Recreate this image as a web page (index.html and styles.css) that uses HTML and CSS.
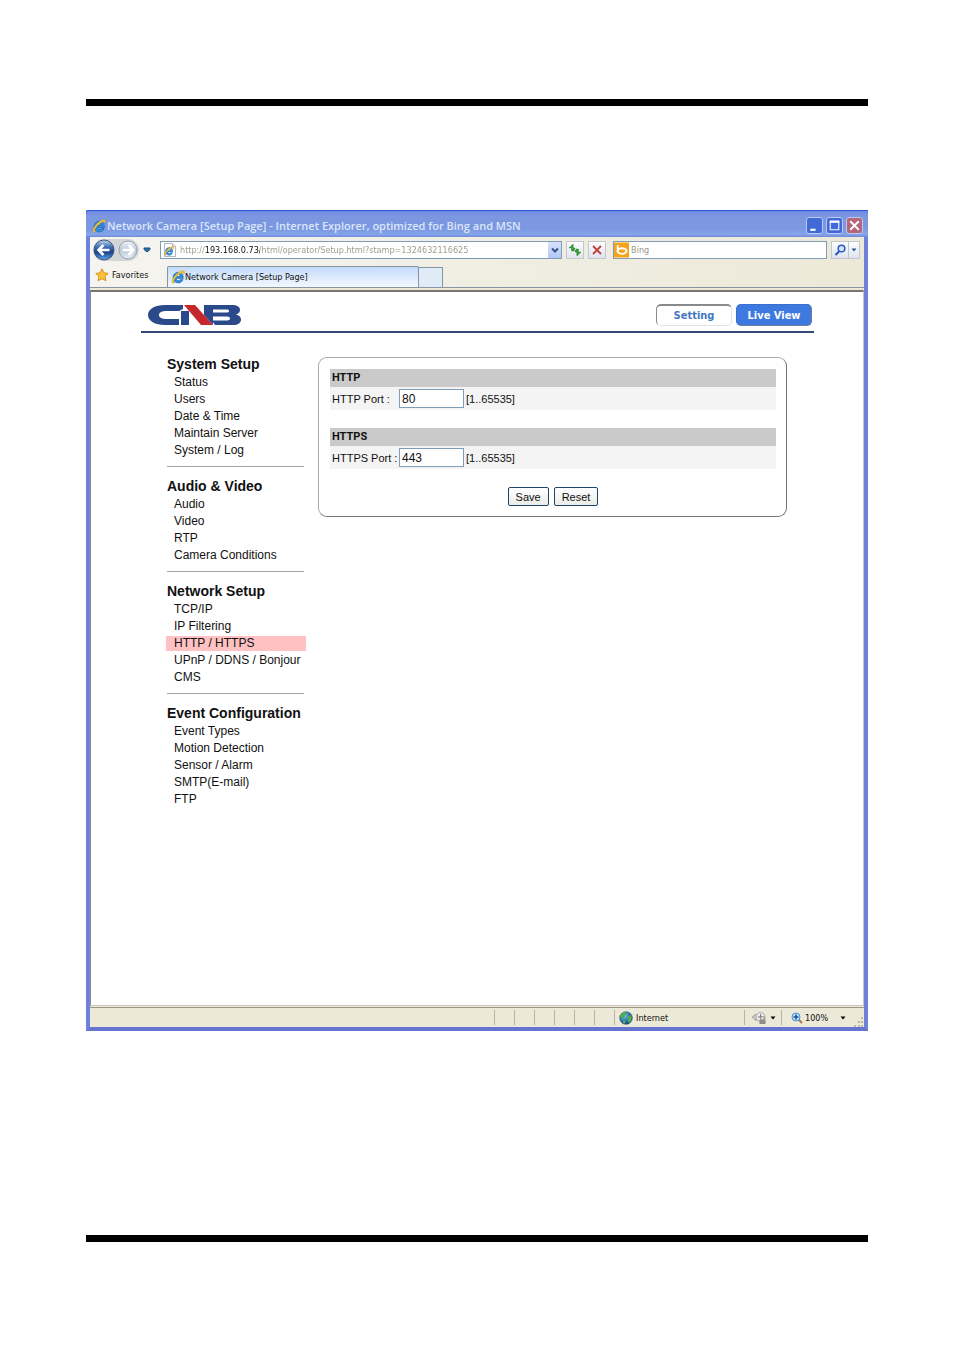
FILE: index.html
```html
<!DOCTYPE html>
<html lang="en">
<head>
  <meta charset="UTF-8" />
  <meta name="viewport" content="width=device-width, initial-scale=1.0"/>
  <title>Network Camera [Setup Page]</title>
  <link rel="stylesheet" href="styles.css">
</head>
<body>
  <!-- shared icons -->
  <svg class="defs" width="0" height="0" aria-hidden="true">
    <defs>
      <linearGradient id="ball" x1="0" y1="0" x2="0" y2="1">
        <stop offset="0" stop-color="#c9daf0"/>
        <stop offset="0.35" stop-color="#3f6fb4"/>
        <stop offset="0.6" stop-color="#173f8a"/>
        <stop offset="1" stop-color="#5fa8ea"/>
      </linearGradient>
      <linearGradient id="ball-off" x1="0" y1="0" x2="0" y2="1">
        <stop offset="0" stop-color="#f4f7fb"/>
        <stop offset="0.5" stop-color="#b9c6da"/>
        <stop offset="1" stop-color="#e9f0f8"/>
      </linearGradient>
      <radialGradient id="sea" cx="35%" cy="30%" r="75%">
        <stop offset="0" stop-color="#9fd0f5"/>
        <stop offset="0.5" stop-color="#2f7cc4"/>
        <stop offset="1" stop-color="#123f7a"/>
      </radialGradient>
    </defs>
    <symbol id="ie" viewBox="0 0 14 14">
      <path d="M12.300 8.400H5.200c.1 1.300 1 2.100 2.200 2.100.9 0 1.500-.3 2-1h2.600c-.7 2.200-2.300 3.400-4.700 3.400C4.100 12.900 2 10.700 2 7.600s2.200-5.400 5.300-5.400c3.100 0 5.200 2.300 5 6.200zM9.400 6.500C9.200 5.300 8.400 4.600 7.300 4.600S5.400 5.300 5.200 6.500z" fill="#2a8fe0" stroke="#1457a0" stroke-width=".5"/>
      <path d="M1.600 13.200C-.6 11.300 3.200 5.200 7.400 2.400 10.200.600 13 .1 13.500 1.700c.2.900-.2 1.800-.8 2.900.1-1.500-.2-2.100-1.300-1.900C8.700 3.100 4.200 7.200 2.900 10.300c-.5 1.300-.2 1.900.8 1.700-.6 1-1.500 1.700-2.100 1.200z" fill="#f9c433" stroke="#b78312" stroke-width=".3"/>
    </symbol>
  </svg>

  <div class="sheet">
    <hr class="rule">

    <div class="window">
      <div class="titlebar">
        <svg class="icon"><use href="#ie"/></svg>
        <span class="window-title">Network Camera [Setup Page] - Internet Explorer, optimized for Bing and MSN</span>
        <button class="win-btn" aria-label="Minimize"><svg viewBox="0 0 14 14"><path d="M3 10h5v2H3z" fill="#fff"/></svg></button>
        <button class="win-btn" aria-label="Maximize"><svg viewBox="0 0 14 14"><path d="M3 3h8v8H3z" fill="none" stroke="#fff"/><path d="M2.500 2.500h9v2h-9z" fill="#fff"/></svg></button>
        <button class="win-btn close" aria-label="Close"><svg viewBox="0 0 14 14"><path d="M3 3l8 8M11 3l-8 8" stroke="#fff" stroke-width="1.800"/></svg></button>
      </div>

      <div class="navbar">
        <div class="history">
          <div class="pod">
            <button class="plain" aria-label="Back">
              <svg width="22" height="22" viewBox="0 0 22 22"><circle cx="11" cy="11" r="10" fill="url(#ball)" stroke="#3d557f"/><path d="M10.500 6L5.500 11l5 5M6.500 11H16.500" fill="none" stroke="#fff" stroke-width="2.600"/></svg>
            </button>
            <button class="plain" aria-label="Forward">
              <svg width="22" height="22" viewBox="0 0 22 22"><circle cx="11" cy="11" r="9" fill="url(#ball-off)" stroke="#97a3b5"/><path d="M11.500 6l5 5-5 5M15.500 11H5.500" fill="none" stroke="#fff" stroke-width="2.600"/></svg>
            </button>
          </div>
          <button class="plain" aria-label="Recent pages">
            <svg width="8" height="6" viewBox="0 0 8 6"><path d="M1 1h6v1.500L4 5 1 2.500z" fill="#2f72a8" stroke="#1b4a78"/></svg>
          </button>
        </div>
        <div class="field address">
          <svg class="icon" viewBox="0 0 14 14"><path d="M1.500.5h8l3 3v10h-11z" fill="#fff" stroke="#b4b7bd"/><path d="M9.500.5v3h3" fill="none" stroke="#b4b7bd"/><use href="#ie" x="1" y="3" width="10" height="10"/></svg>
          <input type="text" class="url" aria-label="Address" value="http://193.168.0.73/html/operator/Setup.html?stamp=1324632116625">
          <button class="drop" aria-label="Show addresses"><svg width="8" height="7" viewBox="0 0 8 7"><path d="M1 1.500l3 3 3-3" fill="none" stroke="#34538c" stroke-width="2"/></svg></button>
        </div>
        <button class="tool" aria-label="Refresh">
          <svg width="14" height="14" viewBox="0 0 14 14"><path d="M5 1L1 5h2.500v3H6V6.500h1V5H5.500zM9 13l4-4h-2.500V6H8v1.500H7V9h1.500z" fill="#35a035" stroke="#1d7a22" stroke-width=".4"/></svg>
        </button>
        <button class="tool" aria-label="Stop">
          <svg width="14" height="14" viewBox="0 0 14 14"><path d="M3 3l8 8M11 3l-8 8" stroke="#c2403c" stroke-width="1.800"/></svg>
        </button>
        <div class="field search">
          <svg class="bing" viewBox="0 0 14 14"><path d="M0 0h14v14H0z" fill="#f7a21b"/><path d="M3.500 2.500V9" stroke="#fff" stroke-width="1.800"/><ellipse cx="7.500" cy="8" rx="4.200" ry="2.600" fill="none" stroke="#fff" stroke-width="1.800"/></svg>
          <input type="text" aria-label="Search" value="Bing">
        </div>
        <div class="go">
          <button class="tool" aria-label="Search"><svg width="14" height="14" viewBox="0 0 14 14"><path d="M6 8.500L2.500 12" stroke="#2a53b5" stroke-width="2"/><circle cx="8.500" cy="5.500" r="3.300" fill="#d5e6fb" stroke="#2a5cc4" stroke-width="1.500"/></svg></button>
          <button class="tool narrow" aria-label="Search options"><svg width="6" height="4" viewBox="0 0 6 4"><path d="M.5.5h5L3 3.500z" fill="#1e5a96"/></svg></button>
        </div>
      </div>

      <div class="tabbar">
        <button class="favorites">
          <svg class="icon" viewBox="0 0 14 14"><path d="M7 .8l1.900 4 4.300.6-3.100 3 .8 4.400L7 10.700l-3.900 2.100.8-4.400-3.100-3 4.300-.6z" fill="#fbc436" stroke="#c98214" stroke-width=".8"/></svg>
          Favorites
        </button>
        <a class="tab" href="#"><svg class="icon"><use href="#ie"/></svg>Network Camera [Setup Page]</a>
        <button class="new-tab" aria-label="New Tab"></button>
      </div>

      <div class="page">
        <header>
          <svg class="logo" viewBox="0 0 94 20" role="img" aria-label="CNB">
            <path d="M35 0H17C7 0 0 4 0 10s7 10 17 10h14v-6H19c-5 0-8-1.300-8-4s3-4 8-4h12l4-2z" fill="#2b4a8b"/>
            <path d="M33 6h8v14h-8zM56 0h9v20l-9-10z" fill="#2b4a8b"/>
            <path d="M36 0h11l18 20H53z" fill="#c4282c"/>
            <path d="M64 0h20c5 0 8 1.800 8 5 0 2.200-1.500 3.800-4 4.500 3 .7 5 2.400 5 5 0 3.500-3 5.500-8 5.500H67l-3-4.500h14c2.500 0 4-.6 4-2s-1.500-2-4-2H64v-4h14c2 0 3-.4 3-1.500s-1-1.500-3-1.500H64z" fill="#2b4a8b"/>
          </svg>
          <nav class="views">
            <a class="view current" href="#">Setting</a>
            <a class="view live" href="#">Live View</a>
          </nav>
        </header>

        <div class="columns">
          <nav class="menu">
            <section>
              <h2>System Setup</h2>
              <a href="#">Status</a>
              <a href="#">Users</a>
              <a href="#">Date &amp; Time</a>
              <a href="#">Maintain Server</a>
              <a href="#">System / Log</a>
            </section>
            <section>
              <h2>Audio &amp; Video</h2>
              <a href="#">Audio</a>
              <a href="#">Video</a>
              <a href="#">RTP</a>
              <a href="#">Camera Conditions</a>
            </section>
            <section>
              <h2>Network Setup</h2>
              <a href="#">TCP/IP</a>
              <a href="#">IP Filtering</a>
              <a href="#" class="active">HTTP / HTTPS</a>
              <a href="#">UPnP / DDNS / Bonjour</a>
              <a href="#">CMS</a>
            </section>
            <section>
              <h2>Event Configuration</h2>
              <a href="#">Event Types</a>
              <a href="#">Motion Detection</a>
              <a href="#">Sensor / Alarm</a>
              <a href="#">SMTP(E-mail)</a>
              <a href="#">FTP</a>
            </section>
          </nav>

          <form class="panel">
            <h3>HTTP</h3>
            <div class="row">
              <label for="http-port">HTTP Port :</label>
              <input type="text" id="http-port" value="80">
              <span>[1..65535]</span>
            </div>
            <h3>HTTPS</h3>
            <div class="row">
              <label for="https-port">HTTPS Port :</label>
              <input type="text" id="https-port" value="443">
              <span>[1..65535]</span>
            </div>
            <div class="actions">
              <button type="button">Save</button>
              <button type="reset">Reset</button>
            </div>
          </form>
        </div>
      </div>

      <footer class="statusbar">
        <div class="cell message"></div>
        <div class="cell"></div>
        <div class="cell"></div>
        <div class="cell"></div>
        <div class="cell"></div>
        <div class="cell"></div>
        <div class="cell"></div>
        <div class="cell zone">
          <svg class="icon" viewBox="0 0 14 14"><circle cx="7" cy="7" r="6.300" fill="url(#sea)" stroke="#24507e" stroke-width=".6"/><path d="M2 3.500C3.500 1.500 6 1 7.500 1.300L8 3 6 4.500 5.500 7 3.500 7.500 1.500 6zM8.500 6l3-2 1.300 2.500-.8 3.500-2 2-1.500-2.500zM4 9l2.500 1L6 12.800 4 12z" fill="#4fae45"/></svg>
          Internet
        </div>
        <button class="cell privacy" aria-label="Protected mode">
          <svg class="icon" viewBox="0 0 14 14"><path d="M0 6l4-3v2h3v3H4v2z" fill="#c9c9c5" stroke="#8e8e8a" stroke-width=".6"/><circle cx="8.500" cy="6" r="4.500" fill="#ecece8" stroke="#a5a5a1"/><path d="M8.500 3v3H6" fill="none" stroke="#777"/><path d="M7.500 8.500h6V13h-6z" fill="#8d8d8d"/><path d="M8.800 8.500V7c0-2 3.400-2 3.400 0v1.500" fill="none" stroke="#777"/></svg>
          <svg width="6" height="4" viewBox="0 0 6 4"><path d="M.5.5h5L3 3.500z"/></svg>
        </button>
        <button class="cell zoom">
          <svg width="12" height="12" viewBox="0 0 12 12"><path d="M7.500 7.500L11 11" stroke="#a8754c" stroke-width="2"/><circle cx="5" cy="5" r="4" fill="#bfe0fa" stroke="#4a90d0"/><path d="M5 2.500v5M2.500 5h5" stroke="#1b4f9c" stroke-width="1.500"/></svg>
          <span>100%</span>
          <svg width="6" height="4" viewBox="0 0 6 4"><path d="M.5.5h5L3 3.500z"/></svg>
        </button>
        <svg class="grip" width="10" height="10" viewBox="0 0 10 10"><path d="M7 0h2v2H7zM4 4h2v2H4zM7 4h2v2H7zM0 8h2v2H0zM4 8h2v2H4zM7 8h2v2H7z" fill="#bdb9a6"/></svg>
      </footer>
    </div>

    <hr class="rule">
  </div>
</body>
</html>
```

FILE: styles.css
```css
:root {
  --frame: #7081dc;
  --chrome: #ece9d8;
  --line: #8795a3;
  --field: #7f9db9;
  --navy: #334a76;
  --ui: "DejaVu Sans Condensed", "DejaVu Sans", sans-serif;
}

* {
  margin: 0;
  padding: 0;
  box-sizing: border-box;
}

body {
  background: #fff;
  color: #111;
  font-family: "Liberation Sans", Arial, sans-serif;
  font-size: 12px;
}

a {
  color: inherit;
  text-decoration: none;
}

button,
input {
  font: inherit;
  color: inherit;
}

svg {
  display: block;
  flex: none;
}

.defs {
  position: absolute;
}

.icon {
  width: 14px;
  height: 14px;
}

.sheet {
  padding: 99px 86px 108px;
}

.rule {
  height: 7px;
  border: 0;
  background: #000;
}

/* browser window */
.window {
  margin: 104px 0 204px;
  border: 4px solid var(--frame);
  border-top: 0;
  border-bottom-color: #6674d0;
  background: var(--chrome);
  font-family: var(--ui);
  font-size: 9px;
}

.titlebar {
  display: flex;
  align-items: center;
  gap: 3px;
  height: 27px;
  margin: 0 -4px;
  padding: 3px 5px 0 6px;
  border-top: 1px solid #2b55d4;
  border-radius: 4px 0 0 0;
  background: linear-gradient(#6c8ae4, #7b97e0 20%, #7c98e0 70%, #85a6ea 90%, #7288d8);
}

.titlebar .icon {
  margin-right: -2px;
}

.window-title {
  flex: 1;
  color: #dbe6fb;
  font-family: "Open Sans", "Noto Sans", sans-serif;
  font-size: 11px;
  font-weight: 600;
  white-space: nowrap;
}

.win-btn {
  width: 17px;
  height: 17px;
  border: 1px solid #b9c9f4;
  border-radius: 3px;
  background: #4169d8;
}

.win-btn.close {
  background: #b7657a;
}

.navbar {
  display: flex;
  align-items: center;
  gap: 4px;
  height: 26px;
  padding: 0 4px 0 3px;
  background: linear-gradient(90deg, #f5f4ef, var(--chrome));
}

.history {
  display: flex;
  align-items: center;
  gap: 4px;
  width: 63px;
}

.pod {
  display: flex;
  gap: 2px;
  border-radius: 11px;
  background: #d4d5d6;
}

.plain {
  border: 0;
  background: none;
}

.field {
  display: flex;
  align-items: center;
  height: 18px;
  border: 1px solid var(--field);
  background: #fff;
}

.field input {
  flex: 1;
  min-width: 0;
  border: 0;
  outline: 0;
  background: none;
  color: #9a9789;
}

.address {
  flex: 402;
  gap: 3px;
  padding-left: 2px;
}

/* host part of the address is darker than the rest */
.address .url {
  background: linear-gradient(90deg, #9a9789 25px, #111 25px, #111 80px, #9a9789 80px);
  background-clip: text;
  -webkit-background-clip: text;
  color: transparent;
}

.drop {
  display: flex;
  align-items: center;
  justify-content: center;
  width: 13px;
  height: 16px;
  border: 0;
  background: linear-gradient(#d6e2fd, #b3c8f5);
}

.tool {
  display: flex;
  align-items: center;
  justify-content: center;
  width: 18px;
  height: 18px;
  border: 1px solid #c3c6cf;
  background: linear-gradient(#fdfdfe, #dfe4ee);
}

.tool.narrow {
  width: 11px;
  border-left: 0;
}

.search {
  flex: 214;
  gap: 2px;
  margin-left: 3px;
}

.bing {
  width: 15px;
  height: 16px;
}

.go {
  display: flex;
}

.tabbar {
  display: flex;
  align-items: flex-end;
  height: 25px;
  border-bottom: 1px solid var(--line);
  background: linear-gradient(90deg, #f5f4ef, var(--chrome));
}

.favorites {
  display: flex;
  align-items: center;
  gap: 3px;
  width: 77px;
  height: 24px;
  padding-left: 5px;
  border: 0;
  background: none;
}

.tab {
  display: flex;
  align-items: center;
  width: 252px;
  height: 21px;
  padding-left: 3px;
  border: 1px solid var(--line);
  border-bottom: 0;
  border-radius: 2px 2px 0 0;
  background: linear-gradient(#c3dbfa, #f4f8fd);
}

.new-tab {
  width: 24px;
  height: 20px;
  border: 1px solid var(--line);
  border-width: 1px 1px 0 0;
  background: #e0ebf8;
}

.page {
  min-height: 716px;
  margin-top: 2px;
  padding: 0 49px 0 50px;
  border: 1px solid #c9c7ba;
  border-top: 2px solid #77776f;
  border-left-color: #8c8c88;
  background: #fff;
  font-family: "Liberation Sans", Arial, sans-serif;
  font-size: 12px;
}

header {
  display: flex;
  align-items: center;
  justify-content: space-between;
  height: 41px;
  padding: 6px 2px 0 7px;
  border-bottom: 2px solid var(--navy);
}

.logo {
  width: 94px;
  height: 20px;
}

.views {
  display: flex;
  gap: 4px;
  font-family: var(--ui);
  font-size: 11px;
  font-weight: bold;
}

.view {
  width: 76px;
  height: 22px;
  border: 1px solid #e2e2e2;
  border-radius: 5px;
  line-height: 22px;
  text-align: center;
}

.view.current {
  border-top: 2px solid #8a8a8a;
  border-left-color: #8a8a8a;
  color: #4377c4;
  line-height: 20px;
}

.view.live {
  border-color: #3a70cc #6c7d9c #6c7d9c #3a70cc;
  background: #3d79df;
  color: #fff;
}

.columns {
  display: flex;
  align-items: flex-start;
  gap: 12px;
  padding: 21px 27px 20px 25px;
}

.menu {
  width: 140px;
}

.menu section + section {
  margin-top: 9px;
}

.menu section:not(:last-child)::after {
  content: "";
  display: block;
  height: 1px;
  margin: 7px 2px 0 1px;
  background: #a5a69c;
}

.menu h2 {
  padding-left: 1px;
  font-size: 14px;
  line-height: 20px;
  white-space: nowrap;
}

.menu a {
  display: block;
  padding-left: 8px;
  line-height: 17px;
  white-space: nowrap;
}

.menu a.active {
  height: 15px;
  margin: 1px 0;
  background: #ffc1c1;
  line-height: 15px;
}

.panel {
  flex: 1;
  margin-top: 3px;
  padding: 11px 10px 10px 11px;
  border: 1px solid #aaa;
  border-right-color: #777;
  border-bottom-color: #777;
  border-radius: 9px;
}

.panel h3 {
  padding-left: 2px;
  background: #cacaca;
  font-family: Roboto, "Liberation Sans", sans-serif;
  font-size: 11px;
  line-height: 18px;
}

.row {
  display: flex;
  align-items: center;
  gap: 2px;
  height: 23px;
  margin-bottom: 18px;
  padding-left: 2px;
  background: #f4f4f4;
  font-size: 11px;
  white-space: nowrap;
}

.row label {
  width: 65px;
}

.row input {
  width: 65px;
  height: 19px;
  padding-left: 2px;
  border: 1px solid var(--field);
  background: #fff;
  font-size: 12px;
}

.actions {
  display: flex;
  justify-content: center;
  gap: 5px;
}

.actions button {
  height: 19px;
  padding: 0 7px;
  border: 1px solid #1d4568;
  border-radius: 2px;
  background: linear-gradient(#fff, #ecebe5);
  font-size: 11px;
}

.statusbar {
  display: flex;
  align-items: center;
  height: 20px;
  margin-top: 1px;
  border-top: 1px solid #9a9888;
}

.cell {
  display: flex;
  align-items: center;
  width: 20px;
  height: 15px;
  border: 0;
  border-left: 1px solid #b8b5a4;
  background: none;
}

.message {
  flex: 1;
  border-left: 0;
}

.zone {
  gap: 3px;
  width: 130px;
  padding-left: 4px;
}

.privacy {
  gap: 4px;
  width: 37px;
  padding-left: 7px;
}

.zoom {
  gap: 2px;
  width: 73px;
  padding-left: 9px;
}

.zoom span {
  flex: 1;
  text-align: left;
}

.zoom svg:last-child {
  margin-right: 8px;
}

.grip {
  align-self: flex-end;
}
```
